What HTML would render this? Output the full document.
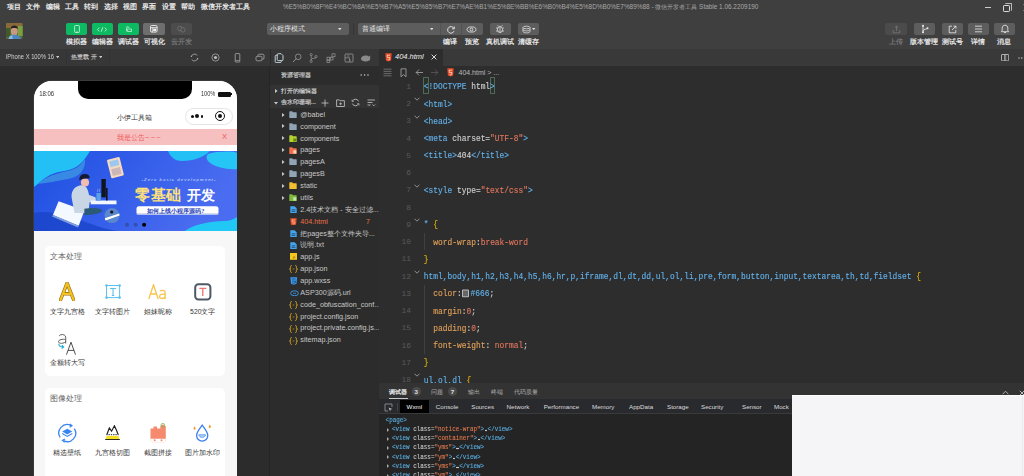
<!DOCTYPE html>
<html><head><meta charset="utf-8">
<style>
*{box-sizing:border-box;margin:0;padding:0}
html,body{width:1024px;height:476px;overflow:hidden}
body{position:relative;background:#2c2c2c;font-family:"Liberation Sans",sans-serif;color:#ddd}
.a{position:absolute}
.t{position:absolute;white-space:nowrap;line-height:1}
#top{left:0;top:0;width:1024px;height:49px;background:#3f3f3f}
.menu{font-size:6.8px;color:#f4f4f4;top:4px;-webkit-text-stroke:0.2px #f4f4f4}
.btn{position:absolute;top:23px;width:22px;height:12px;border-radius:2px;background:#5a5a5a}
.btn.g{background:#0dba62}
.lbl{position:absolute;top:38px;font-size:6.7px;color:#f0f0f0;-webkit-text-stroke:0.2px currentColor;text-align:center;width:40px;line-height:8px}
#sub{left:0;top:49px;width:1024px;height:16px;background:#373737}
#sim{left:0;top:65px;width:270px;height:411px;background:#2c2c2c;border-right:1px solid #262626}
#exp{left:270px;top:65px;width:109px;height:411px;background:#2c2c2c}
#ed{left:379px;top:65px;width:645px;height:318px;background:#2d2d2d}
#dbg{left:379px;top:383px;width:645px;height:93px;background:#242424}
.mono{font-family:"Liberation Mono",monospace}
</style></head><body>

<!-- TOP BAR -->
<div id="top" class="a">
  <div class="t menu" style="left:7px">项目</div>
  <div class="t menu" style="left:26px">文件</div>
  <div class="t menu" style="left:45.5px">编辑</div>
  <div class="t menu" style="left:65px">工具</div>
  <div class="t menu" style="left:84px">转到</div>
  <div class="t menu" style="left:104px">选择</div>
  <div class="t menu" style="left:123px">视图</div>
  <div class="t menu" style="left:142px">界面</div>
  <div class="t menu" style="left:162px">设置</div>
  <div class="t menu" style="left:181px">帮助</div>
  <div class="t menu" style="left:201px">微信开发者工具</div>
  <div class="t" style="left:283px;top:4px;font-size:6.43px;color:#a8a8a8">%E5%B0%8F%E4%BC%8A%E5%B7%A5%E5%85%B7%E7%AE%B1%E5%8E%BB%E6%B0%B4%E5%8D%B0%E7%89%88 - 微信开发者工具 Stable 1.06.2209190</div>

  <!-- avatar -->
  <svg class="a" style="left:6px;top:22.8px" width="16.7" height="16.2" viewBox="0 0 16.7 16.2"><defs><clipPath id="av"><rect width="16.7" height="16.2" rx="1.5"/></clipPath><filter id="bl"><feGaussianBlur stdDeviation="0.5"/></filter></defs><g clip-path="url(#av)"><rect width="16.7" height="16.2" fill="#5a6a38"/><g filter="url(#bl)"><rect x="0" y="0" width="16.7" height="5" fill="#8a6a3a"/><rect x="12" y="3" width="5" height="10" fill="#7aa040"/><rect x="0" y="5" width="4" height="9" fill="#3f5a2a"/><ellipse cx="8.3" cy="8.2" rx="3.4" ry="4.6" fill="#c99a82"/><path d="M4.8 6c0-2.6 1.6-3.4 3.5-3.4s3.5.8 3.5 3.4C10.5 4.8 6 4.8 4.8 6z" fill="#2a2420"/><path d="M2.5 16.2C3 13 5.2 11.8 8 11.8s6.2 1 7.2 4.4z" fill="#4a88c0"/><path d="M2.5 16.2C3 13.5 4 12.5 6 12.2L7 16.2z" fill="#8ab8e0"/></g></g></svg>
  <!-- left buttons -->
  <div class="btn g" style="left:65.5px;width:21.5px"><svg class="a" style="left:8px;top:1.8px" width="6" height="8" viewBox="0 0 6 8"><rect x="0.6" y="0.5" width="4.8" height="7" rx="0.8" fill="none" stroke="#d8f5e4" stroke-width="0.8"/><path d="M2.3 6.3h1.4" stroke="#d8f5e4" stroke-width="0.6"/></svg></div>
  <div class="btn g" style="left:91.5px;width:21.5px"><svg class="a" style="left:5.8px;top:3.5px" width="10" height="5" viewBox="0 0 10 5"><path d="M2.2 0.6L0.5 2.5 2.2 4.4M7.8 0.6L9.5 2.5 7.8 4.4M5.8 0.3L4.2 4.7" fill="none" stroke="#d8f5e4" stroke-width="0.8"/></svg></div>
  <div class="btn g" style="left:117.5px;width:21.5px"><svg class="a" style="left:8px;top:2.5px" width="6" height="6" viewBox="0 0 6 6"><path d="M0.5 1.2h3M0.5 1.2L1.5 0.3M1.2 3h4.3v2.5H1.2zM0.5 2.2v3" fill="none" stroke="#d8f5e4" stroke-width="0.7"/></svg></div>
  <div class="btn" style="left:143.2px;width:21.8px;background:#6e6e6e"><svg class="a" style="left:7.3px;top:2.1px" width="7.6" height="7.6" viewBox="0 0 7.6 7.6"><rect x="0.5" y="0.5" width="6.6" height="6.6" rx="1.2" fill="none" stroke="#f0f0f0" stroke-width="0.9"/><path d="M0.6 2.6h6.4M2.3 2.6v4.5" stroke="#f0f0f0" stroke-width="0.8"/><rect x="3.2" y="3.6" width="3" height="2.6" fill="#f0f0f0"/></svg></div>
  <div class="btn" style="left:170.5px;width:21.5px;background:#4c4c4c"><svg class="a" style="left:6.2px;top:3px" width="9" height="6.5" viewBox="0 0 9 6.5"><circle cx="2.9" cy="2.5" r="2.3" fill="none" stroke="#7a7a7a" stroke-width="0.7"/><circle cx="5.9" cy="3.9" r="2.2" fill="#4c4c4c" stroke="#7a7a7a" stroke-width="0.7"/></svg></div>
  <div class="lbl" style="left:56px">模拟器</div>
  <div class="lbl" style="left:82px">编辑器</div>
  <div class="lbl" style="left:108px">调试器</div>
  <div class="lbl" style="left:134px">可视化</div>
  <div class="lbl" style="left:161px;color:#7a7a7a">云开发</div>
  <!-- selects -->
  <div class="a" style="left:266.5px;top:23px;width:82px;height:12px;border-radius:2px;background:#5d5d5d"></div>
  <div class="t" style="left:270.3px;top:25.9px;font-size:6.6px;color:#e6e6e6">小程序模式</div>
  <svg class="a" style="left:338.3px;top:27.7px" width="3.6" height="2.4" viewBox="0 0 3.6 2.4"><path d="M0 0h3.6L1.8 2.3z" fill="#ddd"/></svg>
  <div class="a" style="left:353px;top:23px;width:1px;height:12px;background:#353535"></div>
  <div class="a" style="left:358px;top:23px;width:125px;height:12px;border-radius:2px;background:#5d5d5d"></div>
  <div class="a" style="left:440px;top:23px;width:1px;height:12px;background:#525252"></div>
  <div class="a" style="left:461px;top:23px;width:1px;height:12px;background:#525252"></div>
  <div class="t" style="left:362px;top:25.9px;font-size:6.6px;color:#e6e6e6">普通编译</div>
  <svg class="a" style="left:429.9px;top:27.7px" width="3.6" height="2.4" viewBox="0 0 3.6 2.4"><path d="M0 0h3.6L1.8 2.3z" fill="#ddd"/></svg>
  <svg class="a" style="left:446px;top:24.5px" width="10" height="10" viewBox="0 0 10 10"><path d="M7.8 3.2A3.3 3.3 0 1 0 8 6.2" fill="none" stroke="#eee" stroke-width="0.9"/><path d="M8.3 1.6v2.2H6.1" fill="none" stroke="#eee" stroke-width="0.9"/></svg>
  <svg class="a" style="left:466px;top:25px" width="11" height="9" viewBox="0 0 11 9"><ellipse cx="5.5" cy="4.5" rx="4.5" ry="2.6" fill="none" stroke="#eee" stroke-width="0.8"/><circle cx="5.5" cy="4.5" r="1.4" fill="none" stroke="#eee" stroke-width="0.8"/></svg>
  <div class="a" style="left:489.5px;top:23px;width:21.5px;height:12px;border-radius:2px;background:#5d5d5d"></div>
  <svg class="a" style="left:495px;top:24px" width="10" height="10" viewBox="0 0 10 10"><ellipse cx="5" cy="5.5" rx="2.5" ry="3" fill="none" stroke="#eee" stroke-width="0.8"/><path d="M5 2.5v6M1 4h1.8M8.2 4H9M1 7h1.8M7.2 7H9M3.5 2.2l-1-1M6.5 2.2l1-1" stroke="#eee" stroke-width="0.7"/></svg>
  <div class="a" style="left:518px;top:23px;width:21px;height:12px;border-radius:2px;background:#5d5d5d"></div>
  <svg class="a" style="left:521.5px;top:24.5px" width="9" height="9" viewBox="0 0 9 9"><ellipse cx="4.5" cy="2.5" rx="3.5" ry="1.3" fill="none" stroke="#ddd" stroke-width="0.8"/><path d="M1 2.5v4c0 .8 1.6 1.4 3.5 1.4S8 7.3 8 6.5v-4M1 4.5c0 .8 1.6 1.4 3.5 1.4S8 5.3 8 4.5" fill="none" stroke="#ddd" stroke-width="0.8"/></svg>
  <svg class="a" style="left:532.3px;top:27.7px" width="3.4" height="2.4" viewBox="0 0 3.4 2.4"><path d="M0 0h3.4L1.7 2.2z" fill="#ddd"/></svg>
  <div class="lbl" style="left:430px">编译</div>
  <div class="lbl" style="left:452px">预览</div>
  <div class="lbl" style="left:480px">真机调试</div>
  <div class="lbl" style="left:508px">清缓存</div>
  <!-- right buttons -->
  <div class="btn" style="left:885.3px;width:21.7px;background:#4b4b4b"></div>
  <svg class="a" style="left:891.5px;top:24.5px" width="9" height="9" viewBox="0 0 9 9"><path d="M4.5 6V1.2M2.8 2.8l1.7-1.6 1.7 1.6M1.2 5v2.8h6.6V5" fill="none" stroke="#777" stroke-width="0.8"/></svg>
  <div class="btn" style="left:913.5px;width:21.5px;background:#5d5d5d"></div>
  <svg class="a" style="left:919.5px;top:24px" width="10" height="10" viewBox="0 0 10 10"><circle cx="3" cy="1.8" r="1" fill="#eee"/><circle cx="3" cy="8.2" r="1" fill="#eee"/><circle cx="7.5" cy="4.2" r="1" fill="#eee"/><path d="M3 2v6M3 7c0-2 4.5-1.5 4.5-3" fill="none" stroke="#eee" stroke-width="0.8"/></svg>
  <div class="btn" style="left:941.6px;width:21.4px;background:#5d5d5d"></div>
  <svg class="a" style="left:947.5px;top:24.5px" width="9" height="9" viewBox="0 0 9 9"><path d="M4 1.2H1.2v6.6h6.6V5M4 5l4-3.8M5.5 1.2H8v2.4" fill="none" stroke="#eee" stroke-width="0.8"/></svg>
  <div class="btn" style="left:967.5px;width:21.5px;background:#5d5d5d"></div>
  <svg class="a" style="left:974px;top:25px" width="9" height="8" viewBox="0 0 9 8"><path d="M1 1.2h7M1 4h7M1 6.8h7" stroke="#eee" stroke-width="0.8"/></svg>
  <div class="btn" style="left:993.6px;width:21.4px;background:#5d5d5d"></div>
  <svg class="a" style="left:999.5px;top:24px" width="10" height="10" viewBox="0 0 10 10"><path d="M5 1.2c-1.8 0-2.8 1.3-2.8 3v2.3L1.3 7.7h7.4L7.8 6.5V4.2c0-1.7-1-3-2.8-3zM4 8.5h2" fill="none" stroke="#eee" stroke-width="0.8"/></svg>
  <div class="lbl" style="left:876px;color:#7a7a7a">上传</div>
  <div class="lbl" style="left:904px">版本管理</div>
  <div class="lbl" style="left:932px">测试号</div>
  <div class="lbl" style="left:958px">详情</div>
  <div class="lbl" style="left:984px">消息</div>
  <!-- window controls -->
  <div class="a" style="left:984.8px;top:7px;width:6.7px;height:1px;background:#ccc"></div>
  <div class="a" style="left:1003px;top:4.6px;width:7.4px;height:7.4px;border:1px solid #ddd;border-radius:1.2px"></div>
  <div class="a" style="left:1005px;top:3px;width:7px;height:7.5px;border-top:1px solid #bbb;border-right:1px solid #bbb;border-radius:1.2px"></div>
  <div class="a" style="left:1023px;top:4px;width:1px;height:1.2px;background:#777"></div><div class="a" style="left:1023px;top:9.8px;width:1px;height:1.2px;background:#777"></div>
</div>

<div id="sub" class="a">
  <div class="t" style="left:6px;top:5.6px;font-size:5.8px;color:#d0d0d0;transform:scaleY(1.12);transform-origin:0 50%">iPhone X 100% 16</div>
  <svg class="a" style="left:55.6px;top:7.3px" width="3.4" height="2.4" viewBox="0 0 3.4 2.4"><path d="M0 0h3.4L1.7 2.2z" fill="#ccc"/></svg>
  <div class="a" style="left:65.5px;top:0;width:1px;height:16px;background:#333"></div>
  <div class="t" style="left:71.4px;top:5.6px;font-size:5.9px;color:#d0d0d0;-webkit-text-stroke:0.1px currentColor">热重载 开</div>
  <svg class="a" style="left:98.6px;top:7.3px" width="3.4" height="2.4" viewBox="0 0 3.4 2.4"><path d="M0 0h3.4L1.7 2.2z" fill="#ccc"/></svg>
  <div class="a" style="left:108.5px;top:0;width:1px;height:16px;background:#323232"></div>
  <svg class="a" style="left:189.7px;top:4.1px" width="9" height="9" viewBox="0 0 9 9"><path d="M1.3 3.6A3.4 3.4 0 0 1 7.3 2.4M7.7 5.4A3.4 3.4 0 0 1 1.7 6.6" fill="none" stroke="#aaa" stroke-width="0.8"/><circle cx="1.4" cy="3.3" r="0.6" fill="#bbb"/><circle cx="7.6" cy="5.7" r="0.6" fill="#bbb"/></svg>
  <svg class="a" style="left:211px;top:4.1px" width="9" height="9" viewBox="0 0 9 9"><circle cx="4.5" cy="4.5" r="3.6" fill="none" stroke="#aaa" stroke-width="0.8"/><circle cx="4.5" cy="4.5" r="1.6" fill="#bbb"/></svg>
  <svg class="a" style="left:233px;top:3.6px" width="9" height="10" viewBox="0 0 9 10"><rect x="2.2" y="0.6" width="4.6" height="8.4" rx="0.6" fill="none" stroke="#aaa" stroke-width="0.8"/><path d="M2.2 7.5h4.6" stroke="#aaa" stroke-width="0.6"/></svg>
  <svg class="a" style="left:254.5px;top:4.1px" width="10" height="9" viewBox="0 0 10 9"><rect x="1" y="3.3" width="6" height="4.5" rx="1.2" fill="none" stroke="#aaa" stroke-width="0.8"/><path d="M3 3.3V2.4c0-.7.4-1.2 1.2-1.2h3.6c.7 0 1.2.5 1.2 1.2v2.7c0 .7-.5 1.2-1.2 1.2H7" fill="none" stroke="#aaa" stroke-width="0.8"/></svg>
  <div class="a" style="left:269.5px;top:0;width:1px;height:16px;background:#2a2a2a"></div>
  <!-- activity icons -->
  <svg class="a" style="left:273.5px;top:3.6px" width="10" height="10" viewBox="0 0 10 10"><path d="M3.5 2.3H2.2c-.6 0-1 .4-1 1v5.3c0 .6.4 1 1 1h4c.6 0 1-.4 1-1V7.6" fill="none" stroke="#cfe3ea" stroke-width="0.9"/><path d="M4.2 0.7h2.9L9 2.6v4c0 .6-.4 1-1 1H4.2c-.6 0-1-.4-1-1V1.7c0-.6.4-1 1-1z" fill="none" stroke="#cfe3ea" stroke-width="0.9"/></svg>
  <svg class="a" style="left:291.5px;top:3.6px" width="10" height="10" viewBox="0 0 10 10"><circle cx="6.2" cy="3.8" r="2.8" fill="none" stroke="#999" stroke-width="0.8"/><path d="M4.2 5.8L1 9" stroke="#999" stroke-width="0.9"/></svg>
  <svg class="a" style="left:309px;top:3.6px" width="9" height="10" viewBox="0 0 9 10"><circle cx="2.2" cy="1.6" r="1.1" fill="none" stroke="#999" stroke-width="0.7"/><circle cx="2.2" cy="8.4" r="1.1" fill="none" stroke="#999" stroke-width="0.7"/><circle cx="7" cy="3.6" r="1.1" fill="none" stroke="#999" stroke-width="0.7"/><path d="M2.2 2.7v4.6M2.2 6.8c0-2 4.8-1.2 4.8-2.1" fill="none" stroke="#999" stroke-width="0.7"/></svg>
  <svg class="a" style="left:326px;top:3.6px" width="10" height="10" viewBox="0 0 10 10"><rect x="1" y="4.2" width="2.8" height="2.8" fill="none" stroke="#999" stroke-width="0.7"/><rect x="4.2" y="4.2" width="2.8" height="2.8" fill="none" stroke="#999" stroke-width="0.7"/><rect x="1" y="7.2" width="2.8" height="2.2" fill="none" stroke="#999" stroke-width="0.7"/><rect x="6" y="0.8" width="3" height="3" fill="none" stroke="#999" stroke-width="0.7"/></svg>
  <svg class="a" style="left:344px;top:3.6px" width="10" height="10" viewBox="0 0 10 10"><rect x="1" y="1" width="8" height="8" rx="0.8" fill="none" stroke="#999" stroke-width="0.8"/><path d="M3 3h2.5M6 7h1M1 4.8h4.5v4" fill="none" stroke="#999" stroke-width="0.7"/></svg>
  <svg class="a" style="left:359.5px;top:4.1px" width="11" height="9" viewBox="0 0 11 9"><path d="M1 5.8c0-2 2-3.4 4.6-3.4 1.5 0 2.6.5 3.3 1.2l1.4-1.3-.3 2.2c.2.4.3.8.3 1.3 0 1.8-2.2 2.8-4.7 2.8S1 7.6 1 5.8z" fill="#8a8a8a"/></svg>
  <!-- editor tab bar -->
  <div class="a" style="left:378.5px;top:0;width:645.5px;height:16px;background:#393939"></div>
  <div class="a" style="left:378.5px;top:0;width:64px;height:16px;background:#2d2d2d"></div>
  <svg class="a" style="left:384.5px;top:3.5px" width="7" height="9" viewBox="0 0 7 9"><path d="M0.3 0.3h6.4L6.1 7.4 3.5 8.6 0.9 7.4z" fill="#e44d26"/><path d="M2 2.2h3.1M2.2 2.2l.2 2.3h2.5l-.2 2-1.1.4-1.1-.4" fill="none" stroke="#fff" stroke-width="0.6"/></svg>
  <div class="t" style="left:395px;top:4px;font-size:7.5px;color:#eee;font-style:italic">404.html</div>
  <svg class="a" style="left:431px;top:4.5px" width="6" height="6" viewBox="0 0 6 6"><path d="M0.6 0.6l4.8 4.8M5.4 0.6L0.6 5.4" stroke="#eee" stroke-width="0.9"/></svg>
  <svg class="a" style="left:1000.8px;top:4.8px" width="8.2" height="7.4" viewBox="0 0 8.2 7.4"><rect x="0.5" y="0.5" width="7.2" height="6.4" rx="0.5" fill="none" stroke="#ccc" stroke-width="0.8"/><path d="M3.5 0.5v6.4M4.7 0.5v6.4" stroke="#ccc" stroke-width="0.6"/></svg>
  <svg class="a" style="left:1018.2px;top:7.6px" width="6" height="2" viewBox="0 0 6 2"><circle cx="1" cy="1" r="0.7" fill="#ccc"/><circle cx="3.8" cy="1" r="0.7" fill="#ccc"/></svg>
</div>
<div id="sim" class="a">
 <div class="a" style="left:32.8px;top:15.2px;width:204.6px;height:420px;background:#3a3a3a;border-radius:19px 19px 0 0"></div>
 <div class="a" id="phone" style="left:33.6px;top:16px;width:203px;height:420px;background:#f7f7f7;border-radius:18px 18px 0 0;overflow:hidden">
  <div class="a" style="left:0;top:0;width:203px;height:64px;background:#fff"></div>
  <div class="a" style="left:44.4px;top:0;width:114px;height:18px;background:#000;border-radius:0 0 10px 10px"></div>
  <div class="t" style="left:5.6px;top:10px;font-size:6px;color:#333;transform:scaleY(1.18);transform-origin:0 50%">18:06</div>
  <div class="t" style="left:167.4px;top:11.4px;font-size:5.6px;color:#333;transform:scaleY(1.15);transform-origin:0 50%">100%</div>
  <div class="a" style="left:184.9px;top:11px;width:12.3px;height:4.6px;border-radius:1.2px;background:#111"></div>
  <div class="a" style="left:197.4px;top:12.4px;width:1.3px;height:1.8px;background:#111"></div>
  <div class="t" style="left:83.4px;top:32.8px;font-size:7.04px;color:#333">小伊工具箱</div>
  <div class="a" style="left:151.8px;top:26.5px;width:47.3px;height:17.3px;border-radius:9px;border:0.8px solid #e4e4e4;background:#fff"></div>
  <div class="a" style="left:157.7px;top:34px;width:2.6px;height:2.6px;border-radius:2px;background:#111"></div>
  <div class="a" style="left:161.7px;top:33.2px;width:4.2px;height:4.2px;border-radius:3px;background:#111"></div>
  <div class="a" style="left:167.1px;top:34px;width:2.6px;height:2.6px;border-radius:2px;background:#111"></div>
  <div class="a" style="left:181.7px;top:30.3px;width:9.4px;height:9.4px;border-radius:5px;border:1.4px solid #111"></div>
  <div class="a" style="left:184.6px;top:33.2px;width:3.6px;height:3.6px;border-radius:2px;background:#111"></div>
  <div class="a" style="left:0;top:48.1px;width:203px;height:15.6px;background:#f6c0c0"></div>
  <div class="t" style="left:83.4px;top:52.8px;font-size:7.45px;color:#f05a5a">我是公告<span style="letter-spacing:1.3px">~~~</span></div>
  <div class="t" style="left:188.5px;top:52.4px;font-size:7.6px;color:#ea5a5a">X</div>
  <div class="a" style="left:0;top:64.2px;width:203px;height:5.5px;background:#fff"></div>
  <!-- banner -->
  <svg class="a" style="left:0;top:69.7px" width="203" height="80.6" viewBox="0 0 203 80.6">
   <defs><linearGradient id="bg1" x1="0" y1="0" x2="1" y2="0.3"><stop offset="0" stop-color="#1d4fe2"/><stop offset="1" stop-color="#4a6cf0"/></linearGradient>
   <linearGradient id="cy" x1="0" y1="0" x2="1" y2="1"><stop offset="0" stop-color="#1fc8f8"/><stop offset="1" stop-color="#3fb8f0"/></linearGradient></defs>
   <rect width="203" height="80.6" fill="url(#bg1)"/>
   <path d="M0 0H56C50 10 44 18 30 20C14 22 8 30 0 36z" fill="#22c0f5"/>
   <path d="M4 33C12 25 24 22 34 20C44 18 48 12 51 8C52 18 46 26 34 28C22 30 14 32 4 33z" fill="#3a8fe2" opacity="0.9"/>
   <path d="M134 0H176C170 6 160 10 148 10C140 10 136 5 134 0z" fill="#22c0f5"/>
   <path d="M174 3C184 0 200 0 203 2V18C194 19 180 16 175 11C172 8 172 5 174 3z" fill="#25c5f5"/>
   <path d="M150 80.6C158 74 176 70 190 70C196 70 200 68 203 66V80.6z" fill="#22c8f5"/>
   <path d="M0 62C14 58 40 66 60 74C70 78 80 80 90 80.6H0z" fill="#1a45c8" opacity="0.8"/>
   <!-- calculator -->
   <g transform="rotate(-14 82 17)"><rect x="75" y="7" width="13" height="19" rx="1" fill="#f7d9bf"/><rect x="77" y="9" width="9" height="6" fill="#9cc8f0"/><rect x="77" y="17" width="9" height="7" fill="#b8a8b8" opacity="0.7"/></g>
   <!-- laptop -->
   <path d="M24.6 50.2L50.4 59.6 44.7 74.7 18.9 64z" fill="#f4f8ff"/>
   <path d="M18.9 64L44.7 74.7 44 76.5 18 65.6z" fill="#7f9ee0"/>
   <!-- person -->
   <defs><pattern id="chk" width="1.6" height="1.6" patternUnits="userSpaceOnUse"><rect width="1.6" height="1.6" fill="#dde8f2"/><path d="M0 0.8h1.6M0.8 0v1.6" stroke="#a8bcd4" stroke-width="0.35"/></pattern></defs>
   <path d="M40.5 62L37.5 46C37.5 39 41 35 47 34.2 51.5 34 54 37 55 44L61.5 46.2 62 49.5 55.5 51.5 54.5 62z" fill="url(#chk)"/>
   <path d="M50.4 57.7C56 56.5 66 56.5 68.5 59 68.5 62.5 60 64 50.4 64z" fill="#2a5a78"/>
   <ellipse cx="51" cy="31.6" rx="4.1" ry="4" fill="#f4bcae"/>
   <path d="M45.4 29.4C45 25 47.5 23 51 23S56 24.5 55.5 27.5C53 26.6 48.5 27.5 45.4 29.4z" fill="#151a30"/>
   <!-- desk/monitor -->
   <rect x="56.7" y="49.5" width="25.8" height="3.8" fill="#f2f6ff"/>
   <rect x="67.4" y="28" width="4.4" height="18.4" fill="#10151f"/>
   <rect x="72" y="37" width="1.6" height="12.5" fill="#10151f"/>
   <rect x="62.4" y="42" width="4.4" height="7.6" fill="#5aa0e8"/>
   <path d="M63.5 41c-.6-1.2.8-2 .2-3.2M65.4 41c-.6-1.2.8-2 .2-3.2" fill="none" stroke="#cfe0ff" stroke-width="0.4"/>
   <!-- disc -->
   <circle cx="78" cy="64.6" r="7.5" fill="#5a86cc"/>
   <path d="M70.8 67.2L85.2 62.4 85.6 64.6 71.4 69.4z" fill="#fff"/>
   <circle cx="77.7" cy="61" r="1.6" fill="#111"/>
   <!-- texts -->
   <text x="107.4" y="29.8" font-size="4.2" fill="#d8e2ff" font-family="Liberation Sans" font-style="italic" letter-spacing="1.15">-Zero basic development-</text>
   <text x="101.2" y="48.6" font-size="15" fill="#ffe27a" font-weight="bold" font-family="Liberation Serif" letter-spacing="0.6">零基础</text>
   <text x="153.2" y="48.6" font-size="14.5" fill="#fff" font-weight="bold" font-family="Liberation Serif">开发</text>
   <rect x="102.5" y="55.3" width="82" height="8.4" rx="2.5" fill="#fff"/>
   <rect x="102.5" y="62.5" width="82" height="1.2" rx="0.6" fill="#a8b8e8"/>
   <text x="113.2" y="62.1" font-size="6.2" fill="#2a3fb8" font-weight="bold" font-family="Liberation Serif">如何上线小程序源码?</text>
   <circle cx="93" cy="73.8" r="2" fill="#3150b0"/>
   <circle cx="101.6" cy="73.8" r="2" fill="#3150b0"/>
   <circle cx="110.1" cy="73.8" r="2" fill="#000"/>
  </svg>
  <!-- card 1 -->
  <div class="a" style="left:11.1px;top:164.6px;width:180.7px;height:130.9px;background:#fff;border-radius:5px"></div>
  <div class="t" style="left:16.4px;top:172px;font-size:7.75px;color:#666">文本处理</div>
  <svg class="a" style="left:25.4px;top:201.3px" width="16.2" height="19" viewBox="0 0 16.2 19"><path d="M1.5 18L8.1 1.2L14.7 18M4.3 11.8H11.9" fill="none" stroke="#8a6a10" stroke-width="3.4" stroke-linejoin="round" stroke-linecap="round"/><path d="M1.5 18L8.1 1.2L14.7 18M4.3 11.8H11.9" fill="none" stroke="#f5c022" stroke-width="2.2" stroke-linejoin="round" stroke-linecap="round"/></svg>
  <svg class="a" style="left:71.2px;top:203.4px" width="16.1" height="15.1" viewBox="0 0 16.1 15.1"><rect x="1.5" y="1.5" width="13.1" height="12.1" fill="none" stroke="#5cc0f0" stroke-width="1"/><circle cx="1.5" cy="1.5" r="1.3" fill="#5cc0f0"/><circle cx="14.6" cy="1.5" r="1.3" fill="#5cc0f0"/><circle cx="1.5" cy="13.6" r="1.3" fill="#5cc0f0"/><circle cx="14.6" cy="13.6" r="1.3" fill="#5cc0f0"/><path d="M5 4.5h6.1M8.05 4.5v7M6.8 11.5h2.5" fill="none" stroke="#5cc0f0" stroke-width="1.1"/></svg>
  <svg class="a" style="left:114.2px;top:203px" width="19" height="15.5" viewBox="0 0 19 15.5"><path d="M0.8 15L5.5 0.8 10.2 15M2.5 10H8.5" fill="none" stroke="#f7c44a" stroke-width="1.3"/><path d="M12 7.2c.8-1 3.6-1.2 4.6 0 .5.6.5 1.4.5 2.4V15M17.1 10.2c-2.8-.3-5.5.2-5.5 2.4 0 2.4 4 2.6 5.5.2" fill="none" stroke="#f7c44a" stroke-width="1.3"/></svg>
  <svg class="a" style="left:160.4px;top:202.2px" width="17.6" height="17.6" viewBox="0 0 17.6 17.6"><rect x="1.2" y="1.2" width="15.2" height="15.2" rx="3.2" fill="#fff" stroke="#505866" stroke-width="2"/><path d="M5.3 5.4h7M8.8 5.4v7.6" stroke="#f07070" stroke-width="1.3"/></svg>
  <div class="t" style="left:-6.600000000000001px;width:80px;text-align:center;top:227.70px;font-size:6.8px;color:#333">文字九宫格</div>
  <div class="t" style="left:38.8px;width:80px;text-align:center;top:227.70px;font-size:6.8px;color:#333">文字转图片</div>
  <div class="t" style="left:84.0px;width:80px;text-align:center;top:227.70px;font-size:6.8px;color:#333">姐妹昵称</div>
  <div class="t" style="left:129.2px;width:80px;text-align:center;top:227.70px;font-size:6.8px;color:#333">520文字</div>
  <svg class="a" style="left:23.4px;top:251.6px" width="19.5" height="22.1" viewBox="0 0 19.5 22.1"><path d="M2.2 2.8c1-1.6 5.2-1.8 6.2.2.3.7.3 1.6.3 2.4V10.5M8.7 6.3C5.8 6.1 1.5 6.6 1.5 8.6c0 2.3 5.6 2.4 7.2-.2" fill="none" stroke="#555" stroke-width="0.95"/><path d="M9.5 21.6L14 9.2 18.5 21.6M11 17.4H17" fill="none" stroke="#444" stroke-width="0.95"/><path d="M1.8 10.8c0 2.2 2 3.2 4.5 3.2M4.8 12.2l1.9 1.8-2 1.6" fill="none" stroke="#22b0d8" stroke-width="1.1"/></svg>
  <div class="t" style="left:-6.399999999999999px;width:80px;text-align:center;top:279.40px;font-size:6.8px;color:#333">金额转大写</div>
  <div class="a" style="left:11.1px;top:306.6px;width:180.7px;height:140px;background:#fff;border-radius:5px"></div>
  <div class="t" style="left:16.4px;top:314.4px;font-size:7.75px;color:#666">图像处理</div>
  <svg class="a" style="left:23.4px;top:342.2px" width="20.5" height="20.2" viewBox="0 0 20.5 20.2"><path d="M3.2 14.5A8.3 8.3 0 0 1 14 2.6M17.3 5.7A8.3 8.3 0 0 1 6.5 17.6" fill="none" stroke="#3a86f0" stroke-width="1.3"/><path d="M12.8 1L15 2.8 12.6 4.3M7.7 19.2L5.5 17.4 7.9 15.9" fill="none" stroke="#3a86f0" stroke-width="1.2"/><path d="M10.25 5.8L15.3 8.6 10.25 11.4 5.2 8.6z" fill="#3a86f0"/><path d="M5.2 10.6L10.25 13.4 15.3 10.6" fill="none" stroke="#3a86f0" stroke-width="1.1"/></svg>
  <svg class="a" style="left:70.3px;top:344px" width="17" height="15.2" viewBox="0 0 17 15.2"><path d="M3 9.2L5.3 3 7.6 6.2 10.4 0.8 12.8 6 14 9.2" fill="none" stroke="#222" stroke-width="1.2"/><path d="M2.2 9.7h12.6" stroke="#222" stroke-width="1" stroke-dasharray="1.4 0.9"/><path d="M2.6 11h11.8l1.2 3.6H1.4z" fill="#f8e020"/><path d="M1.2 14.6h14.6" stroke="#222" stroke-width="1.1"/></svg>
  <svg class="a" style="left:116.0px;top:342.2px" width="16.3" height="20.2" viewBox="0 0 16.3 20.2"><path d="M0.5 5.5h3V3.5h3.5v2h3.3V3.2l2.5-1.8 3 1.8v13.2c0 1.8-1.2 3-3 3H3.5c-1.8 0-3-1.2-3-3z" fill="#f68a6e"/><circle cx="12.8" cy="2.2" r="1.8" fill="none" stroke="#7ab050" stroke-width="0.8"/><path d="M0.5 15.8h15.3v1c0 1.8-1.2 2.9-3 2.9H3.5c-1.8 0-3-1.1-3-2.9z" fill="#fff"/><circle cx="4.7" cy="17.3" r="1" fill="#f68a6e"/><circle cx="11.5" cy="17.3" r="1" fill="#f68a6e"/></svg>
  <svg class="a" style="left:159.0px;top:343px" width="18.4" height="18.5" viewBox="0 0 18.4 18.5"><path d="M9.2 1.2C7 4.2 3.6 8 3.6 11.6a5.6 5.6 0 0 0 11.2 0C14.8 8 11.4 4.2 9.2 1.2z" fill="#fff" stroke="#3a7ff0" stroke-width="1.3"/><path d="M5.8 10.8c.3 3.4 6.5 3.4 6.8 0z" fill="#b8d8fa" stroke="#3a7ff0" stroke-width="0.7"/><path d="M1.6 2.2C.9 3.3.5 4 .5 4.6a1.1 1.1 0 0 0 2.2 0c0-.6-.4-1.3-1.1-2.4zM16.8 0.5c-.7 1.1-1.1 1.8-1.1 2.4a1.1 1.1 0 0 0 2.2 0c0-.6-.4-1.3-1.1-2.4z" fill="#f59a20"/></svg>
  <div class="t" style="left:-6.399999999999999px;width:80px;text-align:center;top:369.10px;font-size:6.8px;color:#333">精选壁纸</div>
  <div class="t" style="left:38.8px;width:80px;text-align:center;top:369.10px;font-size:6.8px;color:#333">九宫格切图</div>
  <div class="t" style="left:84.0px;width:80px;text-align:center;top:369.10px;font-size:6.8px;color:#333">截图拼接</div>
  <div class="t" style="left:129.2px;width:80px;text-align:center;top:369.10px;font-size:6.8px;color:#333">图片加水印</div>
 </div>
</div>
<div id="exp" class="a">
  <div class="t" style="left:11px;top:7px;font-size:6px;color:#e0e0e0;-webkit-text-stroke:0.1px currentColor">资源管理器</div>
  <svg class="a" style="left:90px;top:9.2px" width="10" height="2" viewBox="0 0 10 2"><circle cx="1.2" cy="1" r="0.75" fill="#ccc"/><circle cx="4.6" cy="1" r="0.75" fill="#ccc"/><circle cx="8" cy="1" r="0.75" fill="#ccc"/></svg>
  <div class="a" style="left:0;top:19.7px;width:108.5px;height:23px;background:#333333"></div>
  <svg class="a" style="left:5px;top:24.2px" width="3" height="4" viewBox="0 0 3 4"><path d="M0 0L2.6 2 0 4z" fill="#c8c8c8"/></svg>
  <div class="t" style="left:11px;top:23px;font-size:6px;color:#e0e0e0;-webkit-text-stroke:0.1px currentColor">打开的编辑器</div>
  <svg class="a" style="left:4.2px;top:36.5px" width="4" height="3" viewBox="0 0 4 3"><path d="M0 0L4 0 2 2.6z" fill="#c8c8c8"/></svg>
  <div class="t" style="left:11px;top:34.7px;font-size:5.9px;color:#e0e0e0;-webkit-text-stroke:0.1px currentColor">去水印珊瑚...</div>
  <svg class="a" style="left:51px;top:33.5px" width="8" height="8" viewBox="0 0 8 8"><path d="M4 0.5v7M0.5 4h7" stroke="#ccc" stroke-width="0.8"/></svg>
  <svg class="a" style="left:65.8px;top:33.5px" width="9" height="8" viewBox="0 0 9 8"><path d="M0.6 0.9h2.6l.8.8h4.4v5.8H0.6z" fill="none" stroke="#ccc" stroke-width="0.8"/><path d="M4.6 3.4v2.8M3.2 4.8H6" stroke="#ccc" stroke-width="0.7"/></svg>
  <svg class="a" style="left:80.8px;top:33.3px" width="9" height="9" viewBox="0 0 9 9"><path d="M7.6 3.4A3.3 3.3 0 0 0 1.5 3.1M1.4 5.6A3.3 3.3 0 0 0 7.5 5.9" fill="none" stroke="#ccc" stroke-width="0.8"/><path d="M1 1.6v1.8h1.8M8 7.4V5.6H6.2" fill="none" stroke="#ccc" stroke-width="0.6"/></svg>
  <svg class="a" style="left:96.5px;top:33.5px" width="9" height="8" viewBox="0 0 9 8"><path d="M0.5 1h7.5M0.5 3.5h5M0.5 6h3M5.5 5.5l1.3 1.3 1.3-1.3" fill="none" stroke="#ccc" stroke-width="0.8"/></svg>
  <svg class="a" style="left:11.6px;top:47.50px" width="3" height="4" viewBox="0 0 3 4"><path d="M0 0L2.6 2 0 4z" fill="#c8c8c8"/></svg>
  <svg class="a" style="left:19.3px;top:46.00px" width="8" height="7" viewBox="0 0 8 7"><path d="M0.3 0.9c0-.35.25-.6.6-.6h2.2l.9.9h3.1c.35 0 .6.25.6.6v4.6c0 .35-.25.6-.6.6H0.9c-.35 0-.6-.25-.6-.6z" fill="#90a4b4"/></svg>
  <div class="t" style="left:30.3px;top:45.80px;font-size:7.2px;color:#c8c8c8">@babel</div>
  <svg class="a" style="left:11.6px;top:59.37px" width="3" height="4" viewBox="0 0 3 4"><path d="M0 0L2.6 2 0 4z" fill="#c8c8c8"/></svg>
  <svg class="a" style="left:19.3px;top:57.87px" width="8" height="7" viewBox="0 0 8 7"><path d="M0.3 0.9c0-.35.25-.6.6-.6h2.2l.9.9h3.1c.35 0 .6.25.6.6v4.6c0 .35-.25.6-.6.6H0.9c-.35 0-.6-.25-.6-.6z" fill="#90a4b4"/></svg>
  <div class="t" style="left:30.3px;top:57.67px;font-size:7.2px;color:#c8c8c8">component</div>
  <svg class="a" style="left:11.6px;top:71.24px" width="3" height="4" viewBox="0 0 3 4"><path d="M0 0L2.6 2 0 4z" fill="#c8c8c8"/></svg>
  <svg class="a" style="left:19.3px;top:69.74px" width="8" height="7" viewBox="0 0 8 7"><path d="M0.3 0.9c0-.35.25-.6.6-.6h2.2l.9.9h3.1c.35 0 .6.25.6.6v4.6c0 .35-.25.6-.6.6H0.9c-.35 0-.6-.25-.6-.6z" fill="#b5d330"/><rect x="4.2" y="3.5" width="3" height="3" fill="#6a8a10"/></svg>
  <div class="t" style="left:30.3px;top:69.54px;font-size:7.2px;color:#c8c8c8">components</div>
  <svg class="a" style="left:11.6px;top:83.11px" width="3" height="4" viewBox="0 0 3 4"><path d="M0 0L2.6 2 0 4z" fill="#c8c8c8"/></svg>
  <svg class="a" style="left:19.3px;top:81.61px" width="8" height="7" viewBox="0 0 8 7"><path d="M0.3 0.9c0-.35.25-.6.6-.6h2.2l.9.9h3.1c.35 0 .6.25.6.6v4.6c0 .35-.25.6-.6.6H0.9c-.35 0-.6-.25-.6-.6z" fill="#f0704a"/><rect x="4.3" y="3.3" width="3" height="3.3" rx="0.5" fill="#ffd0c0"/></svg>
  <div class="t" style="left:30.3px;top:81.41px;font-size:7.2px;color:#c8c8c8">pages</div>
  <svg class="a" style="left:11.6px;top:94.98px" width="3" height="4" viewBox="0 0 3 4"><path d="M0 0L2.6 2 0 4z" fill="#c8c8c8"/></svg>
  <svg class="a" style="left:19.3px;top:93.48px" width="8" height="7" viewBox="0 0 8 7"><path d="M0.3 0.9c0-.35.25-.6.6-.6h2.2l.9.9h3.1c.35 0 .6.25.6.6v4.6c0 .35-.25.6-.6.6H0.9c-.35 0-.6-.25-.6-.6z" fill="#90a4b4"/></svg>
  <div class="t" style="left:30.3px;top:93.28px;font-size:7.2px;color:#c8c8c8">pagesA</div>
  <svg class="a" style="left:11.6px;top:106.85px" width="3" height="4" viewBox="0 0 3 4"><path d="M0 0L2.6 2 0 4z" fill="#c8c8c8"/></svg>
  <svg class="a" style="left:19.3px;top:105.35px" width="8" height="7" viewBox="0 0 8 7"><path d="M0.3 0.9c0-.35.25-.6.6-.6h2.2l.9.9h3.1c.35 0 .6.25.6.6v4.6c0 .35-.25.6-.6.6H0.9c-.35 0-.6-.25-.6-.6z" fill="#90a4b4"/></svg>
  <div class="t" style="left:30.3px;top:105.15px;font-size:7.2px;color:#c8c8c8">pagesB</div>
  <svg class="a" style="left:11.6px;top:118.72px" width="3" height="4" viewBox="0 0 3 4"><path d="M0 0L2.6 2 0 4z" fill="#c8c8c8"/></svg>
  <svg class="a" style="left:19.3px;top:117.22px" width="8" height="7" viewBox="0 0 8 7"><path d="M0.3 0.9c0-.35.25-.6.6-.6h2.2l.9.9h3.1c.35 0 .6.25.6.6v4.6c0 .35-.25.6-.6.6H0.9c-.35 0-.6-.25-.6-.6z" fill="#f0c030"/></svg>
  <div class="t" style="left:30.3px;top:117.02px;font-size:7.2px;color:#c8c8c8">static</div>
  <svg class="a" style="left:11.6px;top:130.59px" width="3" height="4" viewBox="0 0 3 4"><path d="M0 0L2.6 2 0 4z" fill="#c8c8c8"/></svg>
  <svg class="a" style="left:19.3px;top:129.09px" width="8" height="7" viewBox="0 0 8 7"><path d="M0.3 0.9c0-.35.25-.6.6-.6h2.2l.9.9h3.1c.35 0 .6.25.6.6v4.6c0 .35-.25.6-.6.6H0.9c-.35 0-.6-.25-.6-.6z" fill="#80b840"/><rect x="4.3" y="3.3" width="3" height="3.3" fill="#c8e8a0"/></svg>
  <div class="t" style="left:30.3px;top:128.89px;font-size:7.2px;color:#c8c8c8">utils</div>
  <svg class="a" style="left:19.5px;top:140.96px" width="7" height="7.5" viewBox="0 0 7 7.5"><path d="M0.3 0.3h4.3l2.1 2.1v4.8H0.3z" fill="#45a6f0"/><path d="M1.6 3.8h3.8M1.6 5.4h3.8" stroke="#1d3a5a" stroke-width="0.7"/></svg>
  <div class="t" style="left:30.3px;top:140.76px;font-size:7.2px;color:#c8c8c8">2.4技术文档 - 安全过滤...</div>
  <svg class="a" style="left:19.5px;top:152.83px" width="7" height="7.5" viewBox="0 0 7 7.5"><path d="M0.3 0.2h6.4L6.1 6.4 3.5 7.4 0.9 6.4z" fill="#e8552a"/><path d="M2 1.9h3M2.2 1.9l.2 2h2.3l-.2 1.6-1 .4-1-.4" fill="none" stroke="#ffd8c8" stroke-width="0.55"/></svg>
  <div class="t" style="left:30.3px;top:152.63px;font-size:7.2px;color:#e8704a">404.html</div>
  <div class="t" style="left:96px;top:152.63px;font-size:7px;color:#e8704a">7</div>
  <svg class="a" style="left:19.5px;top:164.70px" width="7" height="7.5" viewBox="0 0 7 7.5"><path d="M0.3 0.3h4.3l2.1 2.1v4.8H0.3z" fill="#45a6f0"/><path d="M1.6 3.8h3.8M1.6 5.4h3.8" stroke="#1d3a5a" stroke-width="0.7"/></svg>
  <div class="t" style="left:30.3px;top:164.50px;font-size:7.2px;color:#c8c8c8">把pages整个文件夹导...</div>
  <svg class="a" style="left:19.5px;top:176.57px" width="7" height="7.5" viewBox="0 0 7 7.5"><path d="M0.3 0.3h4.3l2.1 2.1v4.8H0.3z" fill="#45a6f0"/><path d="M1.6 3.8h3.8M1.6 5.4h3.8" stroke="#1d3a5a" stroke-width="0.7"/></svg>
  <div class="t" style="left:30.3px;top:176.37px;font-size:7.2px;color:#c8c8c8">说明.txt</div>
  <svg class="a" style="left:19.5px;top:188.44px" width="7.3" height="7" viewBox="0 0 7.3 7"><rect x="0" y="0" width="7.3" height="6.8" fill="#f4c81c"/><path d="M3.8 3.6v2M5.2 4.2c0-.4-1-.5-1 .1" fill="none" stroke="#5a4a10" stroke-width="0.6"/></svg>
  <div class="t" style="left:30.3px;top:188.24px;font-size:7.2px;color:#c8c8c8">app.js</div>
  <svg class="a" style="left:19.2px;top:200.31px" width="9" height="8" viewBox="0 0 9 8"><path d="M2.6 0.5C1.4 0.5 1.6 1.5 1.6 2.6c0 .8-.4 1.3-1.1 1.4.7.1 1.1.6 1.1 1.4 0 1.1-.2 2.1 1 2.1M6.4 0.5c1.2 0 1 1 1 2.1 0 .8.4 1.3 1.1 1.4-.7.1-1.1.6-1.1 1.4 0 1.1.2 2.1-1 2.1" fill="none" stroke="#e8b020" stroke-width="0.9"/><path d="M3.6 4h1.8" stroke="#e8b020" stroke-width="0.6"/></svg>
  <div class="t" style="left:30.3px;top:200.11px;font-size:7.2px;color:#c8c8c8">app.json</div>
  <svg class="a" style="left:19.5px;top:212.18px" width="7.5" height="8" viewBox="0 0 7.5 8"><path d="M0.4 0.3h6.7L6.5 6.7 3.75 7.7 1 6.7z" fill="#3d9cf0"/><path d="M1.8 2h3.9M2 4.1h3.5l-.2 1.7-1.55.5-1.5-.5" fill="none" stroke="#0d2a50" stroke-width="0.6"/></svg>
  <div class="t" style="left:30.3px;top:211.98px;font-size:7.2px;color:#c8c8c8">app.wxss</div>
  <svg class="a" style="left:19.5px;top:224.55px" width="9" height="6.5" viewBox="0 0 9 6.5"><ellipse cx="4.5" cy="3.25" rx="3.9" ry="2.5" fill="none" stroke="#3d9cf0" stroke-width="0.9"/><path d="M3 3.25h3" stroke="#3d9cf0" stroke-width="0.8"/></svg>
  <div class="t" style="left:30.3px;top:223.85px;font-size:7.2px;color:#c8c8c8">ASP300源码.url</div>
  <svg class="a" style="left:19.2px;top:235.92px" width="9" height="8" viewBox="0 0 9 8"><path d="M2.6 0.5C1.4 0.5 1.6 1.5 1.6 2.6c0 .8-.4 1.3-1.1 1.4.7.1 1.1.6 1.1 1.4 0 1.1-.2 2.1 1 2.1M6.4 0.5c1.2 0 1 1 1 2.1 0 .8.4 1.3 1.1 1.4-.7.1-1.1.6-1.1 1.4 0 1.1.2 2.1-1 2.1" fill="none" stroke="#e8b020" stroke-width="0.9"/><path d="M3.6 4h1.8" stroke="#e8b020" stroke-width="0.6"/></svg>
  <div class="t" style="left:30.3px;top:235.72px;font-size:7.2px;color:#c8c8c8">code_obfuscation_conf...</div>
  <svg class="a" style="left:19.2px;top:247.79px" width="9" height="8" viewBox="0 0 9 8"><path d="M2.6 0.5C1.4 0.5 1.6 1.5 1.6 2.6c0 .8-.4 1.3-1.1 1.4.7.1 1.1.6 1.1 1.4 0 1.1-.2 2.1 1 2.1M6.4 0.5c1.2 0 1 1 1 2.1 0 .8.4 1.3 1.1 1.4-.7.1-1.1.6-1.1 1.4 0 1.1.2 2.1-1 2.1" fill="none" stroke="#e8b020" stroke-width="0.9"/><path d="M3.6 4h1.8" stroke="#e8b020" stroke-width="0.6"/></svg>
  <div class="t" style="left:30.3px;top:247.59px;font-size:7.2px;color:#c8c8c8">project.config.json</div>
  <svg class="a" style="left:19.2px;top:259.66px" width="9" height="8" viewBox="0 0 9 8"><path d="M2.6 0.5C1.4 0.5 1.6 1.5 1.6 2.6c0 .8-.4 1.3-1.1 1.4.7.1 1.1.6 1.1 1.4 0 1.1-.2 2.1 1 2.1M6.4 0.5c1.2 0 1 1 1 2.1 0 .8.4 1.3 1.1 1.4-.7.1-1.1.6-1.1 1.4 0 1.1.2 2.1-1 2.1" fill="none" stroke="#e8b020" stroke-width="0.9"/><path d="M3.6 4h1.8" stroke="#e8b020" stroke-width="0.6"/></svg>
  <div class="t" style="left:30.3px;top:259.46px;font-size:7.2px;color:#c8c8c8">project.private.config.js...</div>
  <svg class="a" style="left:19.2px;top:271.53px" width="9" height="8" viewBox="0 0 9 8"><path d="M2.6 0.5C1.4 0.5 1.6 1.5 1.6 2.6c0 .8-.4 1.3-1.1 1.4.7.1 1.1.6 1.1 1.4 0 1.1-.2 2.1 1 2.1M6.4 0.5c1.2 0 1 1 1 2.1 0 .8.4 1.3 1.1 1.4-.7.1-1.1.6-1.1 1.4 0 1.1.2 2.1-1 2.1" fill="none" stroke="#e8b020" stroke-width="0.9"/><path d="M3.6 4h1.8" stroke="#e8b020" stroke-width="0.6"/></svg>
  <div class="t" style="left:30.3px;top:271.33px;font-size:7.2px;color:#c8c8c8">sitemap.json</div>
</div>
<div id="ed" class="a">
  <svg class="a" style="left:3.5px;top:3px" width="9" height="9" viewBox="0 0 9 9"><path d="M0.5 1.2h8M0.5 3.4h8M0.5 5.6h8M0.5 7.8h8" stroke="#6a6a6a" stroke-width="1"/></svg>
  <svg class="a" style="left:21px;top:2.5px" width="7" height="10" viewBox="0 0 7 10"><path d="M1 0.8h5v8L3.5 6.6 1 8.8z" fill="none" stroke="#aaa" stroke-width="0.8"/></svg>
  <svg class="a" style="left:36px;top:3px" width="9" height="9" viewBox="0 0 9 9"><path d="M8 4.5H1.2M4 1.6L1.2 4.5 4 7.4" fill="none" stroke="#aaa" stroke-width="0.8"/></svg>
  <svg class="a" style="left:50.5px;top:3px" width="9" height="9" viewBox="0 0 9 9"><path d="M1 4.5h6.8M5 1.6l2.8 2.9L5 7.4" fill="none" stroke="#5a5a5a" stroke-width="0.8"/></svg>
  <svg class="a" style="left:67.5px;top:2.5px" width="7" height="9" viewBox="0 0 7 9"><path d="M0.3 0.3h6.4L6.1 7.4 3.5 8.6 0.9 7.4z" fill="#e44d26"/><path d="M2 2.2h3.1M2.2 2.2l.2 2.3h2.5l-.2 2-1.1.4-1.1-.4" fill="none" stroke="#fff" stroke-width="0.6"/></svg>
  <div class="t" style="left:79.5px;top:3.8px;font-size:7px;color:#bbb">404.html &gt; ...</div>
  <div class="a" style="left:44.3px;top:12.3px;width:5.4px;height:17px;border:1px solid #55665a;background:#26332a"></div>
  <div class="a" style="left:110.7px;top:12.3px;width:5.4px;height:17px;border:1px solid #55665a;background:#26332a"></div>
  <div class="t mono" style="left:0;width:32px;text-align:right;top:17.90px;font-size:7.9px;color:#5a5a5a">1</div>
  <div class="t mono" style="left:44.8px;top:18.30px;font-size:7.9px;white-space:pre;-webkit-text-stroke:0.12px currentColor;transform:scaleY(1.13);transform-origin:0 60%"><span style="color:#62b2ec">&lt;!DOCTYPE</span><span style="color:#d0d0d0"> html</span><span style="color:#62b2ec">&gt;</span></div>
  <div class="t mono" style="left:0;width:32px;text-align:right;top:35.15px;font-size:7.9px;color:#5a5a5a">2</div>
  <svg class="a" style="left:35px;top:32.25px" width="6" height="4" viewBox="0 0 6 4"><path d="M0.5 0.7l2.5 2.5 2.5-2.5" fill="none" stroke="#aaa" stroke-width="0.8"/></svg>
  <div class="t mono" style="left:44.8px;top:35.55px;font-size:7.9px;white-space:pre;-webkit-text-stroke:0.12px currentColor;transform:scaleY(1.13);transform-origin:0 60%"><span style="color:#62b2ec">&lt;html&gt;</span></div>
  <div class="t mono" style="left:0;width:32px;text-align:right;top:52.40px;font-size:7.9px;color:#5a5a5a">3</div>
  <svg class="a" style="left:35px;top:49.50px" width="6" height="4" viewBox="0 0 6 4"><path d="M0.5 0.7l2.5 2.5 2.5-2.5" fill="none" stroke="#aaa" stroke-width="0.8"/></svg>
  <div class="t mono" style="left:44.8px;top:52.80px;font-size:7.9px;white-space:pre;-webkit-text-stroke:0.12px currentColor;transform:scaleY(1.13);transform-origin:0 60%"><span style="color:#62b2ec">&lt;head&gt;</span></div>
  <div class="t mono" style="left:0;width:32px;text-align:right;top:69.65px;font-size:7.9px;color:#5a5a5a">4</div>
  <div class="t mono" style="left:44.8px;top:70.05px;font-size:7.9px;white-space:pre;-webkit-text-stroke:0.12px currentColor;transform:scaleY(1.13);transform-origin:0 60%"><span style="color:#62b2ec">&lt;meta</span><span style="color:#d0d0d0"> charset=</span><span style="color:#e2775e">"UTF-8"</span><span style="color:#62b2ec">&gt;</span></div>
  <div class="t mono" style="left:0;width:32px;text-align:right;top:86.90px;font-size:7.9px;color:#5a5a5a">5</div>
  <div class="t mono" style="left:44.8px;top:87.30px;font-size:7.9px;white-space:pre;-webkit-text-stroke:0.12px currentColor;transform:scaleY(1.13);transform-origin:0 60%"><span style="color:#62b2ec">&lt;title&gt;</span><span style="color:#d0d0d0">404</span><span style="color:#62b2ec">&lt;/title&gt;</span></div>
  <div class="t mono" style="left:0;width:32px;text-align:right;top:104.15px;font-size:7.9px;color:#5a5a5a">6</div>
  <div class="t mono" style="left:0;width:32px;text-align:right;top:121.40px;font-size:7.9px;color:#5a5a5a">7</div>
  <svg class="a" style="left:35px;top:118.50px" width="6" height="4" viewBox="0 0 6 4"><path d="M0.5 0.7l2.5 2.5 2.5-2.5" fill="none" stroke="#aaa" stroke-width="0.8"/></svg>
  <div class="t mono" style="left:44.8px;top:121.80px;font-size:7.9px;white-space:pre;-webkit-text-stroke:0.12px currentColor;transform:scaleY(1.13);transform-origin:0 60%"><span style="color:#62b2ec">&lt;style</span><span style="color:#d0d0d0"> type=</span><span style="color:#e2775e">"text/css"</span><span style="color:#62b2ec">&gt;</span></div>
  <div class="t mono" style="left:0;width:32px;text-align:right;top:138.65px;font-size:7.9px;color:#5a5a5a">8</div>
  <div class="t mono" style="left:0;width:32px;text-align:right;top:155.90px;font-size:7.9px;color:#5a5a5a">9</div>
  <svg class="a" style="left:35px;top:153.00px" width="6" height="4" viewBox="0 0 6 4"><path d="M0.5 0.7l2.5 2.5 2.5-2.5" fill="none" stroke="#aaa" stroke-width="0.8"/></svg>
  <div class="t mono" style="left:44.8px;top:156.30px;font-size:7.9px;white-space:pre;-webkit-text-stroke:0.12px currentColor;transform:scaleY(1.13);transform-origin:0 60%"><span style="color:#62b2ec">*</span><span style="color:#e0b400"> {</span></div>
  <div class="t mono" style="left:0;width:32px;text-align:right;top:173.15px;font-size:7.9px;color:#5a5a5a">10</div>
  <div class="t mono" style="left:44.8px;top:173.55px;font-size:7.9px;white-space:pre;-webkit-text-stroke:0.12px currentColor;transform:scaleY(1.13);transform-origin:0 60%">  <span style="color:#e0a05a">word-wrap</span><span style="color:#d0d0d0">:</span><span style="color:#e2775e">break-word</span></div>
  <div class="t mono" style="left:0;width:32px;text-align:right;top:190.40px;font-size:7.9px;color:#5a5a5a">11</div>
  <div class="t mono" style="left:44.8px;top:190.80px;font-size:7.9px;white-space:pre;-webkit-text-stroke:0.12px currentColor;transform:scaleY(1.13);transform-origin:0 60%"><span style="color:#e0b400">}</span></div>
  <div class="t mono" style="left:0;width:32px;text-align:right;top:207.65px;font-size:7.9px;color:#5a5a5a">12</div>
  <svg class="a" style="left:35px;top:204.75px" width="6" height="4" viewBox="0 0 6 4"><path d="M0.5 0.7l2.5 2.5 2.5-2.5" fill="none" stroke="#aaa" stroke-width="0.8"/></svg>
  <div class="t mono" style="left:44.8px;top:208.05px;font-size:7.9px;white-space:pre;-webkit-text-stroke:0.12px currentColor;transform:scaleY(1.13);transform-origin:0 60%"><span style="color:#62b2ec">html,body,h1,h2,h3,h4,h5,h6,hr,p,iframe,dl,dt,dd,ul,ol,li,pre,form,button,input,textarea,th,td,fieldset</span><span style="color:#e0b400"> {</span></div>
  <div class="t mono" style="left:0;width:32px;text-align:right;top:224.90px;font-size:7.9px;color:#5a5a5a">13</div>
  <div class="t mono" style="left:44.8px;top:225.30px;font-size:7.9px;white-space:pre;-webkit-text-stroke:0.12px currentColor;transform:scaleY(1.13);transform-origin:0 60%">  <span style="color:#e0a05a">color</span><span style="color:#d0d0d0">:</span><span style="display:inline-block;width:7px;height:7px;margin:0 1.2px 0 0.6px;border:1px solid #bbb;background:#666;vertical-align:-1px;border-radius:1px"></span><span style="color:#62b2ec">#666</span><span style="color:#d0d0d0">;</span></div>
  <div class="t mono" style="left:0;width:32px;text-align:right;top:242.15px;font-size:7.9px;color:#5a5a5a">14</div>
  <div class="t mono" style="left:44.8px;top:242.55px;font-size:7.9px;white-space:pre;-webkit-text-stroke:0.12px currentColor;transform:scaleY(1.13);transform-origin:0 60%">  <span style="color:#e0a05a">margin</span><span style="color:#d0d0d0">:</span><span style="color:#e2775e">0</span><span style="color:#d0d0d0">;</span></div>
  <div class="t mono" style="left:0;width:32px;text-align:right;top:259.40px;font-size:7.9px;color:#5a5a5a">15</div>
  <div class="t mono" style="left:44.8px;top:259.80px;font-size:7.9px;white-space:pre;-webkit-text-stroke:0.12px currentColor;transform:scaleY(1.13);transform-origin:0 60%">  <span style="color:#e0a05a">padding</span><span style="color:#d0d0d0">:</span><span style="color:#e2775e">0</span><span style="color:#d0d0d0">;</span></div>
  <div class="t mono" style="left:0;width:32px;text-align:right;top:276.65px;font-size:7.9px;color:#5a5a5a">16</div>
  <div class="t mono" style="left:44.8px;top:277.05px;font-size:7.9px;white-space:pre;-webkit-text-stroke:0.12px currentColor;transform:scaleY(1.13);transform-origin:0 60%">  <span style="color:#e0a05a">font-weight</span><span style="color:#d0d0d0">: </span><span style="color:#e2775e">normal</span><span style="color:#d0d0d0">;</span></div>
  <div class="t mono" style="left:0;width:32px;text-align:right;top:293.90px;font-size:7.9px;color:#5a5a5a">17</div>
  <div class="t mono" style="left:44.8px;top:294.30px;font-size:7.9px;white-space:pre;-webkit-text-stroke:0.12px currentColor;transform:scaleY(1.13);transform-origin:0 60%"><span style="color:#e0b400">}</span></div>
  <div class="t mono" style="left:0;width:32px;text-align:right;top:311.15px;font-size:7.9px;color:#5a5a5a">18</div>
  <svg class="a" style="left:35px;top:308.25px" width="6" height="4" viewBox="0 0 6 4"><path d="M0.5 0.7l2.5 2.5 2.5-2.5" fill="none" stroke="#aaa" stroke-width="0.8"/></svg>
  <div class="t mono" style="left:44.8px;top:311.55px;font-size:7.9px;white-space:pre;-webkit-text-stroke:0.12px currentColor;transform:scaleY(1.13);transform-origin:0 60%"><span style="color:#62b2ec">ul,ol,dl</span><span style="color:#e0b400"> {</span></div>
  <div class="a" style="left:45.2px;top:168.15px;width:1px;height:17.20px;background:#404040"></div>
  <div class="a" style="left:45.2px;top:219.90px;width:1px;height:68.95px;background:#404040"></div>
</div>
<div id="dbg" class="a">
  <div class="a" style="left:0;top:0;width:645px;height:16px;background:#333333"></div>
  <div class="t" style="left:9.6px;top:6.0px;font-size:6.3px;color:#ececec;font-weight:bold">调试器</div>
  <div class="a" style="left:10.2px;top:15px;width:18.4px;height:1.2px;background:#c8c8c8"></div>
  <div class="a" style="left:32.6px;top:3.8px;width:9.6px;height:9.6px;border-radius:5px;background:#4a4a4a"></div>
  <div class="t" style="left:35.6px;top:6.1px;font-size:6.2px;color:#e0e0e0;font-weight:bold">3</div>
  <div class="t" style="left:52.2px;top:6.0px;font-size:6.3px;color:#b0b0b0">问题</div>
  <div class="a" style="left:68.8px;top:3.8px;width:9.6px;height:9.6px;border-radius:5px;background:#4a4a4a"></div>
  <div class="t" style="left:71.8px;top:6.1px;font-size:6.2px;color:#e0e0e0;font-weight:bold">7</div>
  <div class="t" style="left:89px;top:6.0px;font-size:6.3px;color:#b0b0b0">输出</div>
  <div class="t" style="left:111.5px;top:6.0px;font-size:6.3px;color:#b0b0b0">终端</div>
  <div class="t" style="left:134.7px;top:6.0px;font-size:6.1px;color:#b0b0b0">代码质量</div>
  <div class="a" style="left:0;top:16px;width:645px;height:14.5px;background:#292a2d;border-bottom:1px solid #3a3a3a"></div>
  <svg class="a" style="left:4.5px;top:19.5px" width="9" height="9" viewBox="0 0 9 9"><path d="M4 8H1V1h7v3" fill="none" stroke="#999" stroke-width="0.8"/><path d="M4.5 4.5l3.8 1.5-1.6.6-.6 1.6z" fill="#bbb"/></svg>
  <div class="a" style="left:18px;top:19.5px;width:1px;height:8px;background:#444"></div>
  <div class="a" style="left:21.2px;top:16.8px;width:29.2px;height:13.3px;background:#000"></div>
  <div class="t" style="left:27.6px;top:20.9px;font-size:6.2px;color:#fff">Wxml</div>
  <div class="t" style="left:56.8px;top:20.9px;font-size:6.2px;color:#ddd">Console</div>
  <div class="t" style="left:92.3px;top:20.9px;font-size:6.2px;color:#ddd">Sources</div>
  <div class="t" style="left:127.6px;top:20.9px;font-size:6.2px;color:#ddd">Network</div>
  <div class="t" style="left:164.7px;top:20.9px;font-size:6.2px;color:#ddd">Performance</div>
  <div class="t" style="left:213px;top:20.9px;font-size:6.2px;color:#ddd">Memory</div>
  <div class="t" style="left:250px;top:20.9px;font-size:6.2px;color:#ddd">AppData</div>
  <div class="t" style="left:288px;top:20.9px;font-size:6.2px;color:#ddd">Storage</div>
  <div class="t" style="left:322px;top:20.9px;font-size:6.2px;color:#ddd">Security</div>
  <div class="t" style="left:363px;top:20.9px;font-size:6.2px;color:#ddd">Sensor</div>
  <div class="t" style="left:395px;top:20.9px;font-size:6.2px;color:#ddd">Mock</div>
  <div class="t mono" style="left:6.6px;top:34.90px;font-size:5.92px;-webkit-text-stroke:0.1px currentColor;transform:scaleY(1.15);transform-origin:0 60%"><span style="color:#5aaee0">&lt;page&gt;</span></div>
  <div class="a" style="left:8.3px;top:45.00px;border-top:2px solid transparent;border-bottom:2px solid transparent;border-left:2.5px solid #aaa"></div>
  <div class="t mono" style="left:12.9px;top:44.20px;font-size:5.92px;-webkit-text-stroke:0.1px currentColor;transform:scaleY(1.15);transform-origin:0 60%"><span style="color:#5aaee0">&lt;view</span><span style="color:#c8c8c8"> class=</span><span style="color:#e0784e">"notice-wrap"</span><span style="color:#5aaee0">&gt;</span><span style="display:inline-block;width:3.55px;height:4px;vertical-align:baseline;position:relative"><span style="position:absolute;left:0.6px;bottom:0;width:2.4px;height:0.9px;background:#c8c8c8"></span></span><span style="color:#5aaee0">&lt;/view&gt;</span></div>
  <div class="a" style="left:8.3px;top:54.12px;border-top:2px solid transparent;border-bottom:2px solid transparent;border-left:2.5px solid #aaa"></div>
  <div class="t mono" style="left:12.9px;top:53.32px;font-size:5.92px;-webkit-text-stroke:0.1px currentColor;transform:scaleY(1.15);transform-origin:0 60%"><span style="color:#5aaee0">&lt;view</span><span style="color:#c8c8c8"> class=</span><span style="color:#e0784e">"container"</span><span style="color:#5aaee0">&gt;</span><span style="display:inline-block;width:3.55px;height:4px;vertical-align:baseline;position:relative"><span style="position:absolute;left:0.6px;bottom:0;width:2.4px;height:0.9px;background:#c8c8c8"></span></span><span style="color:#5aaee0">&lt;/view&gt;</span></div>
  <div class="a" style="left:8.3px;top:63.24px;border-top:2px solid transparent;border-bottom:2px solid transparent;border-left:2.5px solid #aaa"></div>
  <div class="t mono" style="left:12.9px;top:62.44px;font-size:5.92px;-webkit-text-stroke:0.1px currentColor;transform:scaleY(1.15);transform-origin:0 60%"><span style="color:#5aaee0">&lt;view</span><span style="color:#c8c8c8"> class=</span><span style="color:#e0784e">"yms"</span><span style="color:#5aaee0">&gt;</span><span style="display:inline-block;width:3.55px;height:4px;vertical-align:baseline;position:relative"><span style="position:absolute;left:0.6px;bottom:0;width:2.4px;height:0.9px;background:#c8c8c8"></span></span><span style="color:#5aaee0">&lt;/view&gt;</span></div>
  <div class="a" style="left:8.3px;top:72.36px;border-top:2px solid transparent;border-bottom:2px solid transparent;border-left:2.5px solid #aaa"></div>
  <div class="t mono" style="left:12.9px;top:71.56px;font-size:5.92px;-webkit-text-stroke:0.1px currentColor;transform:scaleY(1.15);transform-origin:0 60%"><span style="color:#5aaee0">&lt;view</span><span style="color:#c8c8c8"> class=</span><span style="color:#e0784e">"ym"</span><span style="color:#5aaee0">&gt;</span><span style="display:inline-block;width:3.55px;height:4px;vertical-align:baseline;position:relative"><span style="position:absolute;left:0.6px;bottom:0;width:2.4px;height:0.9px;background:#c8c8c8"></span></span><span style="color:#5aaee0">&lt;/view&gt;</span></div>
  <div class="a" style="left:8.3px;top:81.48px;border-top:2px solid transparent;border-bottom:2px solid transparent;border-left:2.5px solid #aaa"></div>
  <div class="t mono" style="left:12.9px;top:80.68px;font-size:5.92px;-webkit-text-stroke:0.1px currentColor;transform:scaleY(1.15);transform-origin:0 60%"><span style="color:#5aaee0">&lt;view</span><span style="color:#c8c8c8"> class=</span><span style="color:#e0784e">"yms"</span><span style="color:#5aaee0">&gt;</span><span style="display:inline-block;width:3.55px;height:4px;vertical-align:baseline;position:relative"><span style="position:absolute;left:0.6px;bottom:0;width:2.4px;height:0.9px;background:#c8c8c8"></span></span><span style="color:#5aaee0">&lt;/view&gt;</span></div>
  <div class="a" style="left:8.3px;top:90.60px;border-top:2px solid transparent;border-bottom:2px solid transparent;border-left:2.5px solid #aaa"></div>
  <div class="t mono" style="left:12.9px;top:89.80px;font-size:5.92px;-webkit-text-stroke:0.1px currentColor;transform:scaleY(1.15);transform-origin:0 60%"><span style="color:#5aaee0">&lt;view</span><span style="color:#c8c8c8"> class=</span><span style="color:#e0784e">"ym"</span><span style="color:#5aaee0">&gt;</span><span style="display:inline-block;width:3.55px;height:4px;vertical-align:baseline;position:relative"><span style="position:absolute;left:0.6px;bottom:0;width:2.4px;height:0.9px;background:#c8c8c8"></span></span><span style="color:#5aaee0">&lt;/view&gt;</span></div>
  <div class="a" style="left:8.3px;top:99.72px;border-top:2px solid transparent;border-bottom:2px solid transparent;border-left:2.5px solid #aaa"></div>
  <div class="t mono" style="left:12.9px;top:98.92px;font-size:5.92px;-webkit-text-stroke:0.1px currentColor;transform:scaleY(1.15);transform-origin:0 60%"><span style="color:#5aaee0">&lt;view</span><span style="color:#c8c8c8"> class=</span><span style="color:#e0784e">"yms"</span><span style="color:#5aaee0">&gt;</span><span style="display:inline-block;width:3.55px;height:4px;vertical-align:baseline;position:relative"><span style="position:absolute;left:0.6px;bottom:0;width:2.4px;height:0.9px;background:#c8c8c8"></span></span><span style="color:#5aaee0">&lt;/view&gt;</span></div>
</div>
<svg class="a" style="left:1001.5px;top:390px" width="7" height="5" viewBox="0 0 7 5"><path d="M0.6 4.3L3.5 1.2 6.4 4.3" fill="none" stroke="#bbb" stroke-width="0.9"/></svg>
<svg class="a" style="left:1019px;top:389.5px" width="6" height="6" viewBox="0 0 6 6"><path d="M0.8 0.8l4.4 4.4M5.2 0.8L0.8 5.2" stroke="#ccc" stroke-width="0.9"/></svg>
<div class="a" style="left:0;top:65px;width:378.5px;height:0.8px;background:#373737"></div>
<div class="a" style="left:442.5px;top:65px;width:581.5px;height:0.8px;background:#393939"></div>
<div class="a" style="left:792px;top:394.8px;width:232px;height:82px;background:#f5f5f8;border-top:1.5px solid #fff"></div>
<div class="a" style="left:1022px;top:396px;width:1px;height:80px;background:#ececef"></div>

</body></html>
